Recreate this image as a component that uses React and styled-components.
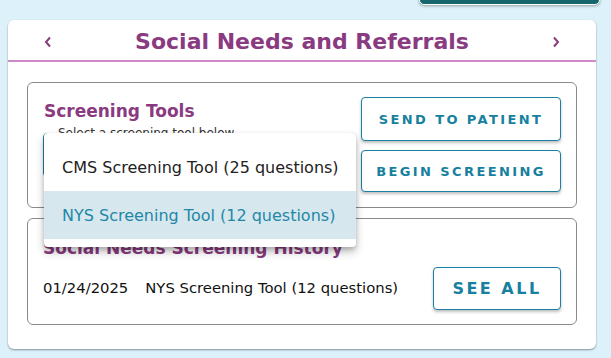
import React from "react";
import styled, { createGlobalStyle } from "styled-components";

const GlobalStyle = createGlobalStyle`
  html, body {
    margin: 0;
    padding: 0;
    background: #dcf1f9;
    font-family: "DejaVu Sans", Verdana, sans-serif;
  }
`;

const Page = styled.div`
  padding: 0 15px 0 8px;
  height: 358px;
  overflow: hidden;
  box-sizing: border-box;
`;

const TopBar = styled.div`
  display: flex;
  justify-content: flex-end;
`;

const TopButton = styled.div`
  width: 179px;
  height: 34px;
  margin-top: -31px;
  margin-right: -4px;
  background: #16666e;
  border: 1px solid #ffffff;
  border-radius: 5px;
  box-shadow: 0 1px 3px rgba(0, 0, 0, 0.35);
`;

const Card = styled.section`
  margin-top: 15px;
  background: #ffffff;
  border-radius: 6px;
  box-shadow: 0 1px 2px rgba(0, 0, 0, 0.4);
  padding-bottom: 24px;
`;

const Header = styled.div`
  height: 40px;
  display: flex;
  align-items: center;
  justify-content: space-between;
  padding: 0 35px;
  border-bottom: 2px solid #d08ac6;
`;

const HeaderTitle = styled.h2`
  margin: 0;
  font-size: 22px;
  font-weight: bold;
  color: #8a3a80;
  padding-top: 3px;
`;

const ArrowButton = styled.button`
  border: none;
  background: none;
  padding: 0;
  width: 10px;
  height: 14px;
  display: flex;
  align-items: center;
  justify-content: center;
  cursor: pointer;
  margin-top: 4px;
`;

const Body = styled.div`
  padding: 20px 19px 0;
  display: flex;
  flex-direction: column;
  gap: 10px;
`;

const Panel = styled.div`
  border: 1px solid #8a8a8a;
  border-radius: 6px;
  display: flex;
  justify-content: space-between;
  align-items: ${(p) => p.$align || "stretch"};
  padding: ${(p) => p.$pad};
  position: relative;
`;

const Column = styled.div`
  display: flex;
  flex-direction: column;
  gap: ${(p) => p.$gap || "0px"};
  padding-top: ${(p) => p.$top || "0px"};
  padding-bottom: ${(p) => p.$bottom || "0px"};
`;

const PanelTitle = styled.h3`
  margin: 0;
  font-size: 17px;
  line-height: 20px;
  font-weight: bold;
  color: #8a3a80;
`;

const SelectBox = styled.div`
  position: relative;
  margin-top: 12px;
  margin-left: -1px;
  width: 313px;
  height: 44px;
  border: 1px solid #1a7fa0;
  border-radius: 4px;
  box-sizing: border-box;
`;

const FloatingLabel = styled.span`
  position: absolute;
  top: -8px;
  left: 10px;
  padding: 0 4px;
  background: #ffffff;
  font-size: 12px;
  line-height: 14px;
  color: #333333;
`;

const Menu = styled.ul`
  position: absolute;
  top: -1px;
  left: 0;
  width: 312px;
  margin: 0;
  padding: 10px 0 8px;
  list-style: none;
  background: #ffffff;
  border-radius: 4px;
  box-shadow: 0 5px 8px rgba(0, 0, 0, 0.25), 0 2px 4px rgba(0, 0, 0, 0.15);
  z-index: 10;
`;

const MenuItem = styled.li`
  height: 48px;
  display: flex;
  align-items: center;
  padding-left: 18px;
  font-size: 16px;
  color: ${(p) => (p.$active ? "#1f87a8" : "#222222")};
  background: ${(p) => (p.$active ? "#d6e8ee" : "transparent")};
`;

const ActionButton = styled.button`
  width: ${(p) => p.$width || "200px"};
  height: ${(p) => p.$height || "44px"};
  border: 1px solid #1a7fa0;
  border-radius: 4px;
  background: #ffffff;
  color: #16809e;
  font-family: "DejaVu Sans", Verdana, sans-serif;
  font-weight: bold;
  font-size: ${(p) => p.$size || "13px"};
  letter-spacing: ${(p) => p.$spacing || "2.4px"};
  box-shadow: 0 2px 3px rgba(0, 0, 0, 0.25);
  cursor: pointer;
  padding: 0;
`;

const HistoryRow = styled.div`
  display: flex;
  align-items: center;
  font-size: 14.8px;
  line-height: 18px;
  color: #111111;
  gap: 17px;
  margin-top: 21px;
`;

const Chevron = ({ dir }) => (
  <svg width="8" height="12" viewBox="0 0 8 12">
    <polyline
      points={dir === "left" ? "6,1.5 2,6 6,10.5" : "2,1.5 6,6 2,10.5"}
      fill="none"
      stroke="#8a3a80"
      strokeWidth="2"
    />
  </svg>
);

const App = () => {
  return (
    <Page>
      <GlobalStyle />
      <TopBar>
        <TopButton />
      </TopBar>
      <Card>
        <Header>
          <ArrowButton aria-label="previous">
            <Chevron dir="left" />
          </ArrowButton>
          <HeaderTitle>Social Needs and Referrals</HeaderTitle>
          <ArrowButton aria-label="next">
            <Chevron dir="right" />
          </ArrowButton>
        </Header>
        <Body>
          <Panel $pad="14px 15px 15px 16px">
            <Column $top="4px">
              <PanelTitle>Screening Tools</PanelTitle>
              <SelectBox>
                <FloatingLabel>Select a screening tool below</FloatingLabel>
                <Menu>
                  <MenuItem>CMS Screening Tool (25 questions)</MenuItem>
                  <MenuItem $active>NYS Screening Tool (12 questions)</MenuItem>
                </Menu>
              </SelectBox>
            </Column>
            <Column $gap="9px">
              <ActionButton>SEND TO PATIENT</ActionButton>
              <ActionButton $height="42px">BEGIN SCREENING</ActionButton>
            </Column>
          </Panel>
          <Panel $pad="19px 15px 14px 15px" $align="flex-end">
            <Column $bottom="13px">
              <PanelTitle>Social Needs Screening History</PanelTitle>
              <HistoryRow>
                <span>01/24/2025</span>
                <span>NYS Screening Tool (12 questions)</span>
              </HistoryRow>
            </Column>
            <ActionButton $width="128px" $height="43px" $size="16px" $spacing="2.5px">
              SEE ALL
            </ActionButton>
          </Panel>
        </Body>
      </Card>
    </Page>
  );
};

export default App;
